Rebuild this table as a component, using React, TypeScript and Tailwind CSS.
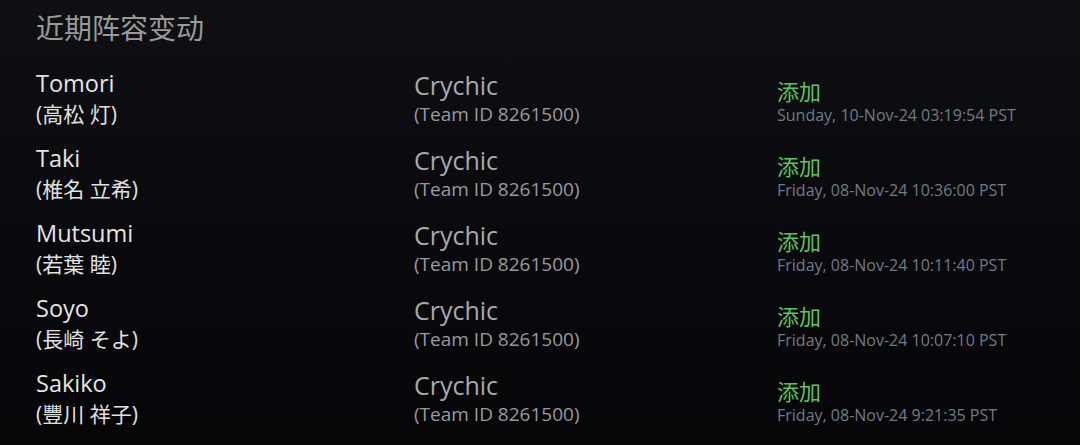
import React from "react";

const rows = [
  { en: "Tomori", jp: "(高松 灯)", date: "Sunday, 10-Nov-24 03:19:54 PST" },
  { en: "Taki", jp: "(椎名 立希)", date: "Friday, 08-Nov-24 10:36:00 PST" },
  { en: "Mutsumi", jp: "(若葉 睦)", date: "Friday, 08-Nov-24 10:11:40 PST" },
  { en: "Soyo", jp: "(長崎 そよ)", date: "Friday, 08-Nov-24 10:07:10 PST" },
  { en: "Sakiko", jp: "(豐川 祥子)", date: "Friday, 08-Nov-24 9:21:35 PST" },
];

const font = { fontFamily: '"Open Sans", "Noto Sans CJK SC", sans-serif' };

export default function App() {
  return (
    <div
      className="w-[1080px] h-[445px] overflow-hidden bg-gradient-to-b from-[#0f1014] to-[#060508] pl-[36px]"
      style={font}
    >
      <div className="pt-[8px] h-[68px] text-[28px] leading-[38px] text-[#9a9a9c] [font-family:'Noto_Sans_CJK_SC',sans-serif]">
        近期阵容变动
      </div>
      <div className="flex flex-col">
        {rows.map((r) => (
          <div key={r.en} className="grid grid-cols-[378px_363px_1fr] h-[75px]">
            <div className="flex flex-col">
              <div className="text-[23.5px] leading-[31px] text-[#e4e4e4]">{r.en}</div>
              <div className="text-[21px] leading-[30px] text-[#e0e0e0] [font-family:'Open_Sans','Noto_Sans_CJK_JP',sans-serif]">{r.jp}</div>
            </div>
            <div className="flex flex-col pt-[3px]">
              <div className="text-[25px] leading-[29px] text-[#a9a9ab]">Crychic</div>
              <div className="text-[19px] leading-[29px] text-[#9a9a9c]">(Team ID 8261500)</div>
            </div>
            <div className="flex flex-col pt-[9px]">
              <div className="text-[22px] leading-[27px] text-[#5cc45c] [font-family:'Noto_Sans_CJK_SC',sans-serif]">添加</div>
              <div className="text-[16px] leading-[22px] text-[#6f7c88]">{r.date}</div>
            </div>
          </div>
        ))}
      </div>
    </div>
  );
}
